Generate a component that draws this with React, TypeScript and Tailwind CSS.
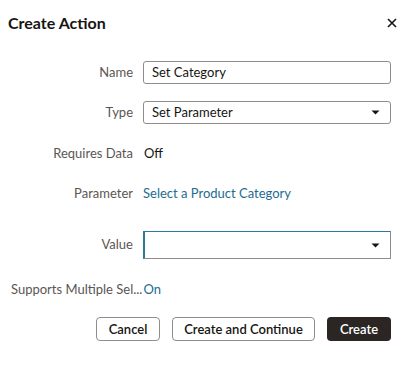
import React from "react";

const Caret = () => (
  <svg width="9" height="5" viewBox="0 0 9 5" className="shrink-0">
    <path d="M0.5 0.5 L8.5 0.5 L4.5 4.5 Z" fill="#161513" />
  </svg>
);

function Row({ label, children, h, mt }: { label: string; children: React.ReactNode; h: string; mt: string }) {
  return (
    <div className={`flex items-center ${h} ${mt}`}>
      <div className="w-[122px] shrink-0 text-right text-[#5b5652] truncate">{label}</div>
      <div className="ml-[10px] flex-1 min-w-0 flex items-center h-full">{children}</div>
    </div>
  );
}

export default function App() {
  return (
    <div
      className="w-[404px] h-[365px] bg-white text-[13px] text-[#161513] overflow-hidden"
      style={{ fontFamily: "Lato, 'Noto Sans', sans-serif" }}
    >
      <div className="h-[46px] flex items-center justify-between pl-[8px] pr-[7px]">
        <div className="text-[16px] font-bold text-[#161513]">Create Action</div>
        <svg width="10" height="10" viewBox="0 0 10 10">
          <path d="M1 1 L9 9 M9 1 L1 9" stroke="#161513" strokeWidth="1.6" />
        </svg>
      </div>
      <div className="pl-[11px] pr-[13px] pt-[15px]">
        <Row label="Name" h="h-[23px]" mt="mt-0">
          <div className="w-full h-full border border-[#8f8c89] rounded-[3px] flex items-center px-[8px] pt-px">
            Set Category
          </div>
        </Row>
        <Row label="Type" h="h-[23px]" mt="mt-[17px]">
          <div className="w-full h-full border border-[#8f8c89] rounded-[3px] flex items-center justify-between pl-[8px] pr-[10px]">
            <span className="pt-px">Set Parameter</span>
            <Caret />
          </div>
        </Row>
        <Row label="Requires Data" h="h-[20px]" mt="mt-[20px]">
          <span className="pl-px">Off</span>
        </Row>
        <Row label="Parameter" h="h-[20px]" mt="mt-[20px]">
          <span className="text-[#1d6c90]">Select a Product Category</span>
        </Row>
        <Row label="Value" h="h-[28px]" mt="mt-[27px]">
          <div className="w-full h-full border border-[#8f8c89] border-t-[#2a7b9b] border-l-2 border-l-[#2a7b9b] flex items-center justify-end pr-[10px]">
            <Caret />
          </div>
        </Row>
        <div className="flex items-center h-[20px] mt-[21px] whitespace-nowrap">
          <span className="text-[#5b5652]">Supports Multiple Sel...</span>
          <span className="ml-[1px] text-[#1d6c90]">On</span>
        </div>
        <div className="mt-[17px] flex justify-end gap-[12px] h-[24px]">
          <button className="w-[64px] h-full border border-[#8f8c89] rounded-[4px] font-semibold text-[#161513] bg-white pt-px">
            Cancel
          </button>
          <button className="w-[143px] h-full border border-[#8f8c89] rounded-[4px] font-semibold text-[#161513] bg-white pt-px">
            Create and Continue
          </button>
          <button className="w-[64px] h-full rounded-[4px] font-semibold text-white bg-[#2b2623] pt-px">
            Create
          </button>
        </div>
      </div>
    </div>
  );
}
